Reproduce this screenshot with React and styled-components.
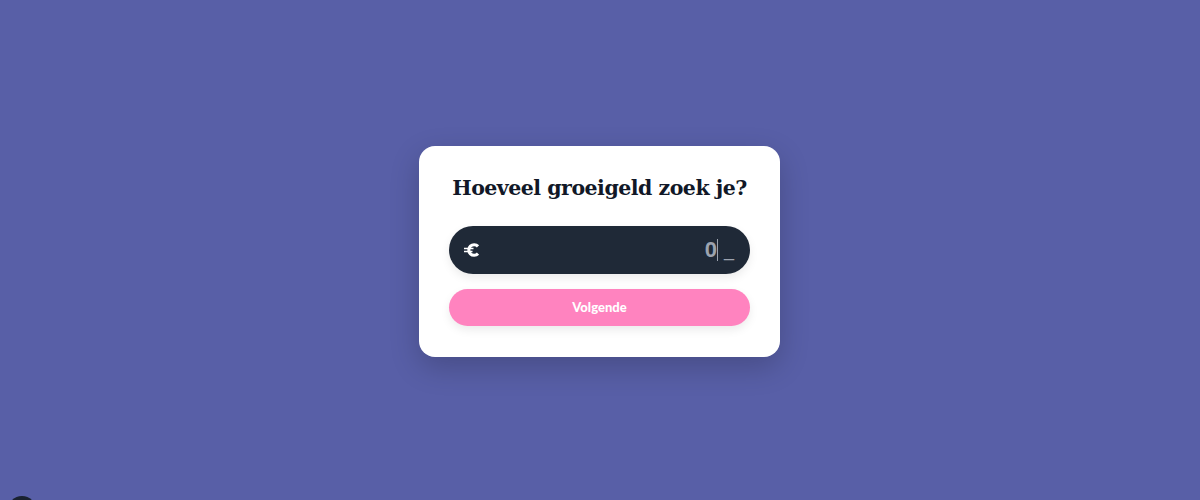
import React from 'react'
import styled, { createGlobalStyle } from 'styled-components';

const GlobalStyle = createGlobalStyle`
    html, body, #root {
        margin: 0;
        height: 100%;
    }
    body {
        background-color: #585fa7;
        overflow: hidden;
    }
`;

const App = () => {
  return (
    <Page>
        <GlobalStyle />
        <Card>
            <Title>Hoeveel groeigeld zoek je?</Title>
            <AmountField>
                <EuroIcon viewBox="0 0 16 16">
                    <path d="M14 4.4a5.3 5.3 0 1 0 0 7.2" fill="none" stroke="#fff" strokeWidth="3.1" />
                    <path d="M0 6.5h9.5M0 9.5h8.5" stroke="#fff" strokeWidth="1.5" />
                </EuroIcon>
                <Amount>0</Amount>
                <Caret />
                <Blank>_</Blank>
            </AmountField>
            <NextButton>Volgende</NextButton>
        </Card>
        <ChatBubble />
    </Page>
  )
}

export default App;

const Page = styled.div`
    height: 100%;
    display: flex;
    align-items: center;
    justify-content: center;
`;
const Card = styled.div`
    width: 361px;
    height: 211px;
    box-sizing: border-box;
    padding: 27px 30px 30px;
    margin: 3px 1px 0 0;
    display: flex;
    flex-direction: column;
    background-color: #fff;
    border-radius: 16px;
    box-shadow: 0 10px 30px rgba(0, 0, 0, 0.2);
`;
const Title = styled.h1`
    margin: 0 0 22px;
    height: 31px;
    font-family: "DejaVu Serif", serif;
    font-size: 20.5px;
    line-height: 31px;
    font-weight: 700;
    letter-spacing: -0.5px;
    text-align: center;
    white-space: nowrap;
    color: #111827;
`;
const AmountField = styled.div`
    height: 48px;
    flex-shrink: 0;
    box-sizing: border-box;
    padding: 0 16px 0 15px;
    display: flex;
    align-items: center;
    background-color: #1f2937;
    border-radius: 24px;
    box-shadow: 0 4px 10px rgba(0, 0, 0, 0.08);
`;
const EuroIcon = styled.svg`
    width: 16px;
    height: 16px;
    margin-right: auto;
`;
const Amount = styled.span`
    font-family: "Liberation Sans", sans-serif;
    font-size: 22px;
    line-height: 22px;
    font-weight: 700;
    color: #9ca3af;
`;
const Caret = styled.span`
    width: 1px;
    height: 22px;
    background-color: #9ca3af;
`;
const Blank = styled.span`
    width: 10px;
    margin-left: 6px;
    font-family: "Liberation Sans", sans-serif;
    font-size: 18px;
    line-height: 18px;
    color: #9ca3af;
`;
const NextButton = styled.button`
    height: 37px;
    flex-shrink: 0;
    margin-top: 15px;
    padding: 0 0 2px;
    border: none;
    border-radius: 19px;
    background-color: #ff83bf;
    color: #fff;
    font-family: "Lato", sans-serif;
    font-size: 13px;
    font-weight: 900;
    box-shadow: 0 4px 10px rgba(0, 0, 0, 0.08);
`;
const ChatBubble = styled.div`
    position: fixed;
    left: 8px;
    top: 496px;
    width: 28px;
    height: 28px;
    border-radius: 50%;
    background-color: #1a2230;
`;
